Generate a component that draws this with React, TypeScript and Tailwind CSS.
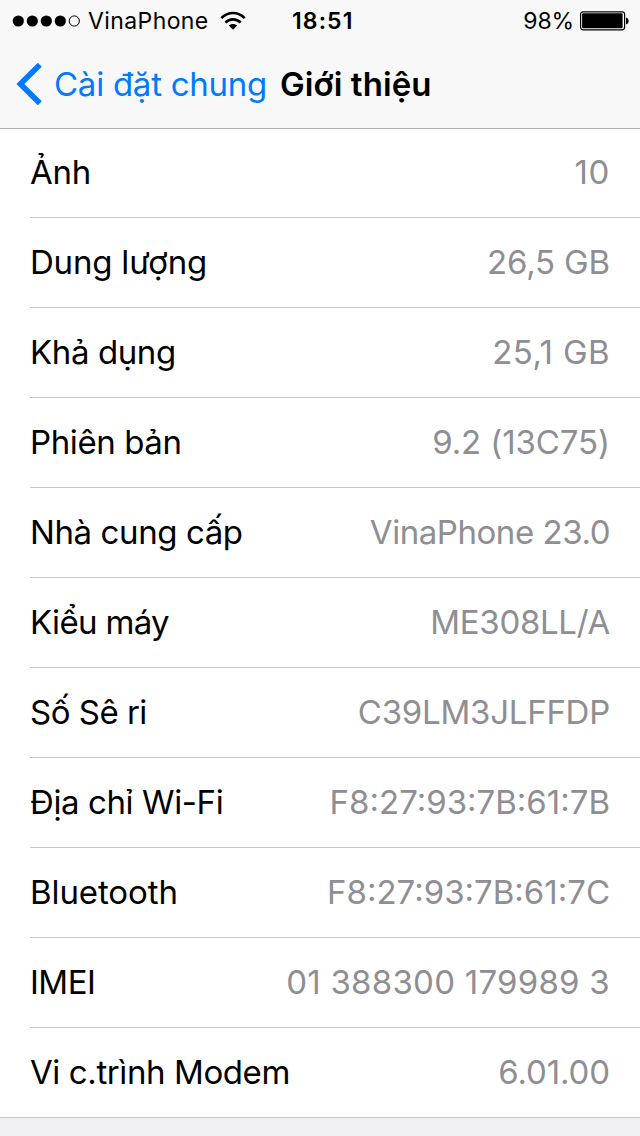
const rows = [
  { label: 'Ảnh', value: '10', l: 'tracking-[-0.3px]', v: 'tracking-[0.6px]' },
  { label: 'Dung lượng', value: '26,5 GB', l: 'tracking-[-0.2px]', v: 'tracking-[-0.15px]' },
  { label: 'Khả dụng', value: '25,1 GB', l: 'tracking-[-0.4px]', v: 'tracking-[0.4px]' },
  { label: 'Phiên bản', value: '9.2 (13C75)', l: 'tracking-[-0.4px]', v: 'tracking-[-0.1px]' },
  { label: 'Nhà cung cấp', value: 'VinaPhone 23.0', l: 'tracking-[-0.4px]', v: 'tracking-[-0.45px]' },
  { label: 'Kiểu máy', value: 'ME308LL/A', l: 'tracking-[-0.65px]', v: 'tracking-[-0.3px]' },
  { label: 'Số Sê ri', value: 'C39LM3JLFFDP', l: 'tracking-[-0.5px]', v: 'tracking-[-0.25px]' },
  { label: 'Địa chỉ Wi-Fi', value: 'F8:27:93:7B:61:7B', l: 'tracking-[-0.4px]', v: 'tracking-[0px]' },
  { label: 'Bluetooth', value: 'F8:27:93:7B:61:7C', l: 'tracking-[-0.1px]', v: 'tracking-[0px]' },
  { label: 'IMEI', value: '01 388300 179989 3', l: 'tracking-[-0.5px]', v: 'tracking-[0.25px]' },
  { label: 'Vi c.trình Modem', value: '6.01.00', l: 'tracking-[-0.4px]', v: 'tracking-[-0.1px]' },
];

function StatusBar() {
  return (
    <div className="grid h-10 grid-cols-[292px_1fr_auto] items-center pt-px pr-[11px] text-[23px] leading-[38px]">
      <div className="flex items-center pl-3">
        <svg className="shrink-0" width="69" height="14" viewBox="0 0 69 14">
          <circle cx="6.3" cy="7" r="5.6" />
          <circle cx="20.3" cy="7" r="5.6" />
          <circle cx="34.3" cy="7" r="5.6" />
          <circle cx="48.3" cy="7" r="5.6" />
          <circle cx="62.3" cy="7" r="5.1" fill="none" stroke="black" />
        </svg>
        <span className="ml-[7px] w-[132px] tracking-[0.4px]">VinaPhone</span>
        <svg className="shrink-0" width="26" height="20" viewBox="0 0 26 20" fill="none" stroke="black" strokeWidth="2.7">
          <path d="M1.3 7.1C8 .3 18 .3 24.7 7.1" />
          <path d="M5.4 11.5c4.4-4.3 10.8-4.3 15.2 0" />
          <path d="M8.8 14.6c2.4-2.2 6-2.2 8.4 0L13 18.8z" fill="black" stroke="none" />
        </svg>
      </div>
      <span className="font-semibold tracking-[1.1px]">18:51</span>
      <div className="flex items-center">
        <span className="mr-[6px] tracking-[-0.1px]">98%</span>
        <svg width="49" height="20" viewBox="0 0 49 20">
          <rect x=".6" y=".8" width="44" height="18" rx="2.5" fill="white" stroke="black" strokeWidth="1.2" />
          <rect x="2.1" y="2.3" width="40.5" height="15" rx="1" />
          <path d="M46 6.5c3.5.5 3.5 6.3 0 6.8z" />
        </svg>
      </div>
    </div>
  );
}

export default function App() {
  return (
    <div className="flex h-[1136px] w-[640px] flex-col overflow-hidden bg-[#efeff4] font-['Inter',sans-serif] text-black">
      <header className="h-[129px] shrink-0 border-b border-[#b2b2b2] bg-[#f8f8f8]">
        <StatusBar />
        <div className="flex h-[88px] items-center pl-4 text-[33px] leading-[40px]">
          <svg width="27" height="44" viewBox="0 0 27 44" fill="none" stroke="#007aff" strokeWidth="5.6">
            <path d="M23.8 2.7 4.4 22 23.8 41.3" />
          </svg>
          <span className="ml-[11px] w-[226px] tracking-[-0.25px] text-[#007aff]">Cài đặt chung</span>
          <span className="font-semibold tracking-[0.1px]">Giới thiệu</span>
        </div>
      </header>
      <main className="border-b border-[#c8c7cc] bg-white">
        {rows.map((r) => (
          <div
            key={r.label}
            className="ml-[30px] flex h-[90px] items-start justify-between border-b border-[#c8c7cc] pt-6 pr-[30px] text-[33px] leading-[40px] first:h-[89px] first:pt-[23px] last:h-[89px] last:border-b-0"
          >
            <span className={r.l}>{r.label}</span>
            <span className={`text-[#8e8e93] ${r.v}`}>{r.value}</span>
          </div>
        ))}
      </main>
    </div>
  );
}
